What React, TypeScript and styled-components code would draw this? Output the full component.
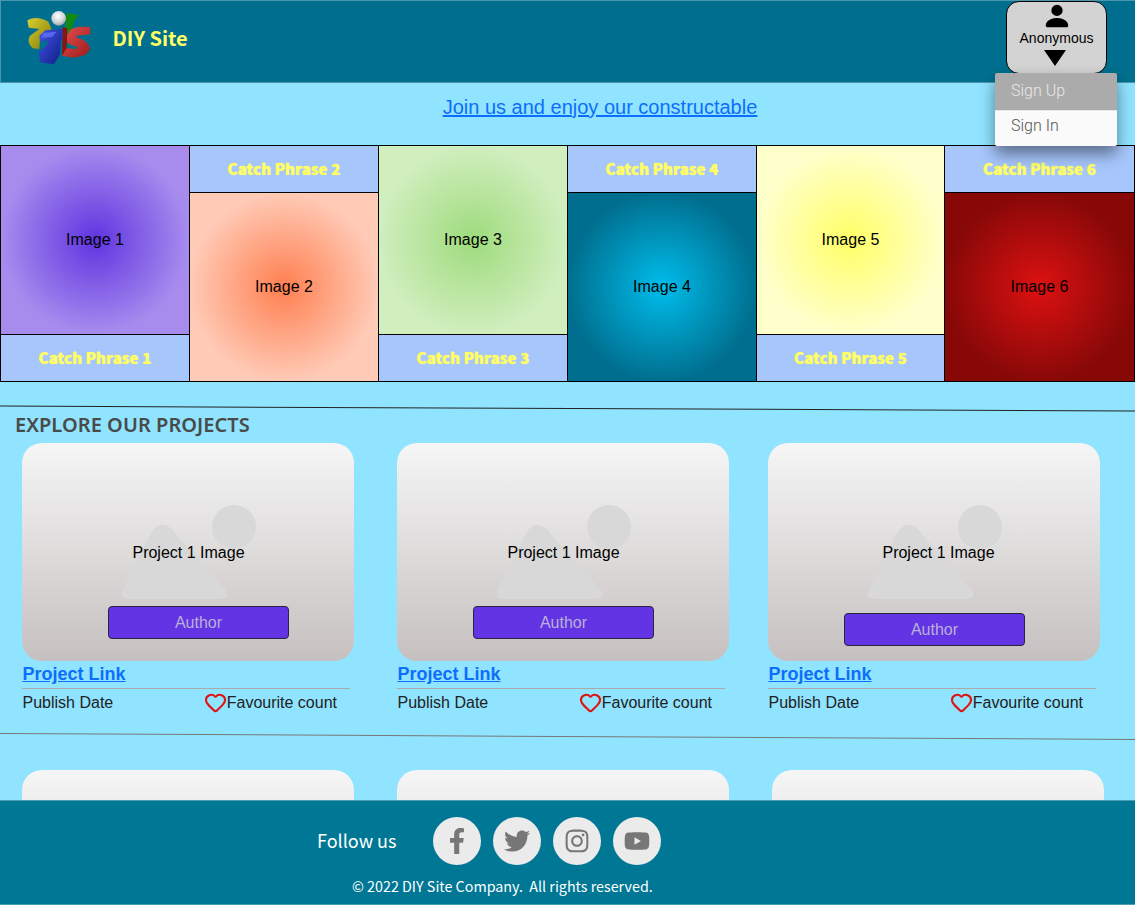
import { createGlobalStyle, styled } from "styled-components"
import { BsPersonFill } from "react-icons/bs"
import { FaFacebookF, FaInstagram, FaTwitter, FaYoutube } from "react-icons/fa"
import { Heart } from "lucide-react"

const GlobalStyle = createGlobalStyle`
  html, body {
    margin: 0;
    height: 100%;
  }
  body {
    background: #90e4ff;
    font-family: "Liberation Sans", Arial, sans-serif;
    color: #000;
  }
  * {
    box-sizing: border-box;
  }
`

const Page = styled.div`
  height: 100vh;
  display: flex;
  flex-direction: column;
`

const Main = styled.main`
  flex: 1;
  min-height: 0;
  overflow: hidden;
`

const Header = styled.header`
  flex: none;
  height: 83px;
  background: #006f8f;
  border: 1px solid #4a97ad;
  border-right: none;
  display: flex;
  align-items: center;
  position: relative;
  z-index: 3;
  padding: 0 0 7px 19px;
`

const SiteName = styled.div`
  margin: 0 0 2px 12.5px;
  font-family: "Noto Sans CJK JP", "Noto Sans", sans-serif;
  font-weight: 700;
  font-size: 20px;
  color: #ffff66;
`

const UserMenu = styled.div`
  position: absolute;
  top: 0;
  right: 28px;
  width: 101px;
  height: 73px;
  background: #d3d3d3;
  border: 1px solid #000;
  border-radius: 13px;
  display: flex;
  flex-direction: column;
  align-items: center;
  font-size: 14px;
`

const UserIcon = styled(BsPersonFill)`
  font-size: 30px;
  flex: none;
  margin: -1px 0 -1px;
`

const UserName = styled.span`
  line-height: 16px;
`

const Caret = styled.span`
  margin: 4px 4px 0 0;
  width: 0;
  height: 0;
  border-left: 11px solid transparent;
  border-right: 11px solid transparent;
  border-top: 16px solid #000;
`

const Dropdown = styled.div`
  position: absolute;
  top: 71px;
  right: -11px;
  width: 122px;
  z-index: 3;
  box-shadow: 0 8px 16px rgba(0, 0, 0, 0.45);
  border-radius: 2px;
  overflow: hidden;
  font-family: Roboto, sans-serif;
  font-size: 16px;
  font-weight: 300;
`

const DropdownItem = styled.div<{ $active?: boolean }>`
  height: 36.5px;
  line-height: 35px;
  padding-left: 16px;
  background: ${(p) => (p.$active ? "#ababab" : "#fafafa")};
  color: ${(p) => (p.$active ? "#e8e8e8" : "#555")};
  & + & {
    line-height: 29px;
    border-top: 1px solid #e8e8e8;
  }
`

const JoinRow = styled.div`
  height: 62px;
  padding: 0 0 14px 65px;
  display: flex;
  align-items: center;
  justify-content: center;
`

const JoinLink = styled.a`
  font-size: 20px;
  color: #0d6efd;
  text-decoration: underline;
`

const Carousel = styled.section`
  display: grid;
  grid-template-columns: repeat(4, 189px) 188px 1fr;
  height: 237px;
  border-top: 1px solid #000;
  border-bottom: 1px solid #000;
  border-right: 1px solid #000;
`

const Tile = styled.div<{ $flip: boolean }>`
  display: flex;
  flex-direction: ${(p) => (p.$flip ? "column-reverse" : "column")};
  border-left: 1px solid #000;
`

const TileImage = styled.div<{ $from: string; $to: string }>`
  flex: 1;
  display: flex;
  align-items: center;
  justify-content: center;
  font-size: 16px;
  background: radial-gradient(circle closest-side, ${(p) => p.$from}, ${(p) => p.$to});
`

const TileCaption = styled.div<{ $flip: boolean }>`
  height: 47px;
  display: flex;
  align-items: center;
  justify-content: center;
  padding-bottom: 2px;
  background: #a6c6fc;
  color: #ffff66;
  font-family: "Noto Sans CJK JP", "Noto Sans", sans-serif;
  font-weight: 900;
  font-size: 15.2px;
  text-shadow: 0 0 1px #ffff66;
  ${(p) => (p.$flip ? "border-bottom" : "border-top")}: 1px solid #000;
`

const Divider = styled.hr<{ $angle: number; $color: string; $top: number; $bottom: number }>`
  margin: ${(p) => p.$top}px 0 ${(p) => p.$bottom}px;
  height: 1px;
  border: none;
  background: ${(p) => p.$color};
  transform: rotate(${(p) => p.$angle}deg);
`

const Heading = styled.h2`
  margin: 1px 0 3px 15px;
  height: 30px;
  line-height: 30px;
  font-family: "Noto Sans", sans-serif;
  font-weight: 600;
  font-size: 20px;
  letter-spacing: 0.05px;
  color: #4a4a4a;
`

const ProjectRow = styled.div`
  display: grid;
  grid-template-columns: repeat(3, 375px);
`

const ProjectCol = styled.article<{ $inset: number }>`
  position: relative;
  padding-left: ${(p) => p.$inset}px;
`

const Thumb = styled.div`
  position: relative;
  width: 332px;
  height: 218px;
  margin-left: -0.5px;
  border-radius: 20px;
  background: linear-gradient(#f6f6f6, #c6c0c0);
`

const Placeholder = styled.svg`
  position: absolute;
  left: 0;
  top: 0;
`

const ThumbLabel = styled.span`
  position: absolute;
  top: 100px;
  left: 0;
  width: 377px;
  text-align: center;
  font-size: 16px;
  line-height: 20px;
`

const AuthorButton = styled.button<{ $left: number; $top: number }>`
  position: absolute;
  left: ${(p) => p.$left}px;
  top: ${(p) => p.$top}px;
  width: 181px;
  height: 33px;
  padding: 0;
  background: #6234e4;
  border: 1px solid #2a2440;
  border-radius: 4px;
  color: #bcb0d8;
  font-family: "Liberation Sans", sans-serif;
  font-size: 16px;
`

const ProjectLink = styled.a`
  display: block;
  margin-top: 1px;
  font-size: 18px;
  line-height: 24px;
  font-weight: 700;
  color: #0d6efd;
  text-decoration: underline;
`

const Meta = styled.div`
  width: 328px;
  margin: 2px 0 0 -0.5px;
  padding: 2px 13px 0 0.5px;
  border-top: 1px solid #aaa;
  display: flex;
  justify-content: space-between;
  align-items: center;
  font-size: 16px;
  line-height: 20px;
  color: #222;
`

const Favourite = styled.span`
  display: flex;
  align-items: center;
`

const HeartIcon = styled(Heart)`
  color: #e01212;
`

const Footer = styled.footer`
  flex: none;
  height: 105px;
  background: #007794;
  border-top: 1px solid #4a9db3;
  border-bottom: 1px solid #4a9db3;
  color: #fff;
  font-family: "Noto Sans CJK JP", "Noto Sans", sans-serif;
  display: flex;
  flex-direction: column;
  align-items: flex-start;
`

const FollowRow = styled.div`
  display: flex;
  align-items: center;
  margin: 16px 0 0 317px;
`

const FollowLabel = styled.span`
  font-size: 18px;
  width: 116px;
  margin-bottom: 2px;
`

const Socials = styled.div`
  display: flex;
  gap: 12px;
`

const SocialLink = styled.a`
  width: 48px;
  height: 48px;
  border-radius: 50%;
  background: #ebebeb;
  color: #777;
  display: flex;
  align-items: center;
  justify-content: center;
  font-size: 26px;
`

const Copyright = styled.div`
  margin: 10px 0 0 352px;
  font-size: 14.3px;
  line-height: 22px;
  white-space: pre;
`

function Logo() {
  return (
    <svg width="80" height="66" viewBox="0 0 240 198">
      <defs>
        <radialGradient id="ball" cx="0.45" cy="0.35" r="0.7">
          <stop offset="0" stopColor="#ffffff" />
          <stop offset="0.6" stopColor="#cfd3d6" />
          <stop offset="1" stopColor="#8f9aa0" />
        </radialGradient>
        <linearGradient id="yellow" x1="0" y1="0" x2="1" y2="1">
          <stop offset="0" stopColor="#d8d030" />
          <stop offset="1" stopColor="#807a08" />
        </linearGradient>
        <linearGradient id="blue" x1="0" y1="0" x2="1" y2="1">
          <stop offset="0" stopColor="#4454e4" />
          <stop offset="1" stopColor="#0e1c86" />
        </linearGradient>
        <linearGradient id="red" x1="0" y1="0" x2="1" y2="1">
          <stop offset="0" stopColor="#e45050" />
          <stop offset="1" stopColor="#9c1a1a" />
        </linearGradient>
      </defs>
      <path d="M22 46 Q50 30 85 50 L95 72 L60 100 L58 132 L38 130 Q18 112 30 92 L58 72 L26 68 Z" fill="url(#yellow)" />
      <path d="M138 24 L178 30 L160 50 L150 130 L136 70 Z" fill="#118a11" />
      <path d="M148 78 Q160 62 210 66 L212 88 L172 92 L168 96 Q208 108 210 132 Q204 154 160 158 L126 152 L128 128 L170 132 L172 126 Q140 118 136 102 Z" fill="url(#red)" />
      <path d="M128 66 L142 70 L140 130 L126 152 Z" fill="#8a1414" />
      <path d="M58 92 L76 76 L128 72 L126 104 L122 108 L120 148 L102 178 L60 172 L56 142 L80 120 L84 106 L60 110 Z" fill="url(#blue)" />
      <path d="M70 84 L110 80 L96 96 L64 98 Z" fill="#5a68f0" />
      <circle cx="116" cy="40" r="22" fill="url(#ball)" />
    </svg>
  )
}

function Project({ inset, btnLeft, btnTop }: { inset: number; btnLeft: number; btnTop: number }) {
  return (
    <ProjectCol $inset={inset}>
      <Thumb>
        <Placeholder width="332" height="218" viewBox="0 0 332 218">
          <circle cx="212" cy="84" r="22" fill="#d8d8d8" />
          <path d="M140 82 C148 82 152 88 156 94 L203 146 C208 152 205 156 198 156 L108 156 C100 156 98 152 101 146 L127 94 C131 87 134 82 140 82 Z" fill="#d8d8d8" />
        </Placeholder>
        <AuthorButton $left={btnLeft} $top={btnTop}>Author</AuthorButton>
      </Thumb>
      <ThumbLabel>Project 1 Image</ThumbLabel>
      <ProjectLink href="#">Project Link</ProjectLink>
      <Meta>
        <span>Publish Date</span>
        <Favourite>
          <HeartIcon size={23} strokeWidth={2.2} />
          Favourite count
        </Favourite>
      </Meta>
    </ProjectCol>
  )
}

const tiles = [
  { from: "#6034e0", to: "#a78cee" },
  { from: "#ff7f50", to: "#ffcab6" },
  { from: "#9edb7c", to: "#d0eebe" },
  { from: "#00bdeb", to: "#006f8f" },
  { from: "#ffff66", to: "#ffffcc" },
  { from: "#dd1111", to: "#880808" },
]

export default function App() {
  return (
    <Page>
      <GlobalStyle />
      <Header>
        <Logo />
        <SiteName>DIY Site</SiteName>
        <UserMenu>
          <UserIcon />
          <UserName>Anonymous</UserName>
          <Caret />
          <Dropdown>
            <DropdownItem $active>Sign Up</DropdownItem>
            <DropdownItem>Sign In</DropdownItem>
          </Dropdown>
        </UserMenu>
      </Header>
      <Main>
        <JoinRow>
          <JoinLink href="#">Join us and enjoy our constructable</JoinLink>
        </JoinRow>
        <Carousel>
          {tiles.map((t, i) => (
            <Tile key={i} $flip={i % 2 === 1}>
              <TileImage $from={t.from} $to={t.to}>Image {i + 1}</TileImage>
              <TileCaption $flip={i % 2 === 1}>Catch Phrase {i + 1}</TileCaption>
            </Tile>
          ))}
        </Carousel>
        <Divider $top={26} $bottom={0} $angle={0.25} $color="#222" />
        <Heading>EXPLORE OUR PROJECTS</Heading>
        <ProjectRow>
          <Project inset={22.5} btnLeft={86} btnTop={163} />
          <Project inset={22.5} btnLeft={76} btnTop={163} />
          <Project inset={18.5} btnLeft={76} btnTop={170} />
        </ProjectRow>
        <Divider $top={22} $bottom={33} $angle={0.3} $color="#777" />
        <ProjectRow>
          <ProjectCol $inset={22.5}><Thumb /></ProjectCol>
          <ProjectCol $inset={22.5}><Thumb /></ProjectCol>
          <ProjectCol $inset={22.5}><Thumb /></ProjectCol>
        </ProjectRow>
      </Main>
      <Footer>
        <FollowRow>
          <FollowLabel>Follow us</FollowLabel>
          <Socials>
            <SocialLink href="#"><FaFacebookF /></SocialLink>
            <SocialLink href="#"><FaTwitter /></SocialLink>
            <SocialLink href="#"><FaInstagram /></SocialLink>
            <SocialLink href="#"><FaYoutube /></SocialLink>
          </Socials>
        </FollowRow>
        <Copyright>© 2022 DIY Site Company.  All rights reserved.</Copyright>
      </Footer>
    </Page>
  )
}
